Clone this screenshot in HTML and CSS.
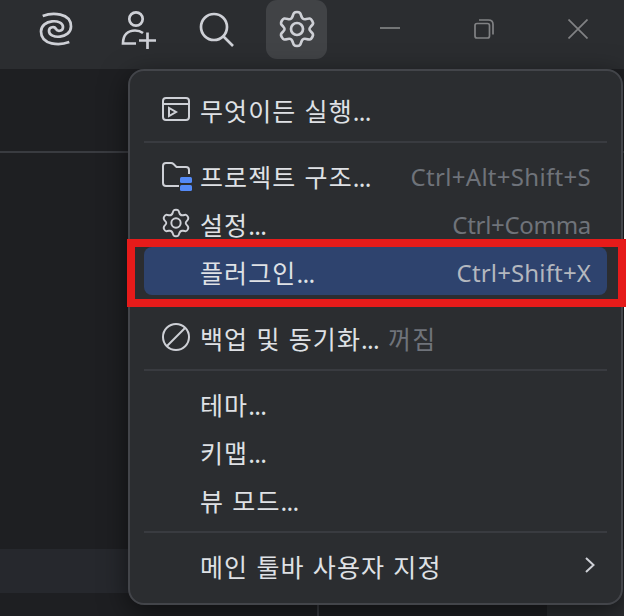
FILE: index.html
```html
<!DOCTYPE html>
<html lang="ko">
<head>
<meta charset="utf-8">
<title>설정</title>
<link rel="stylesheet" href="styles.css">
</head>
<body>
<svg class="defs" width="0" height="0">
  <symbol id="gear" viewBox="0 0 36 38">
    <path d="M18 2 C21 2 21.300 3 22.300 6 C23.300 9 24.500 9.700 27.200 9 C30.500 8.200 31.600 8 33.200 10.800 C34.800 13.500 34 14.500 31.800 16.600 C29.800 18.600 29.800 19.400 31.800 21.400 C34 23.500 34.800 24.500 33.200 27.200 C31.600 30 30.500 29.800 27.200 29 C24.500 28.300 23.300 29 22.300 32 C21.300 35 21 36 18 36 C15 36 14.700 35 13.700 32 C12.700 29 11.500 28.300 8.800 29 C5.500 29.800 4.400 30 2.800 27.200 C1.200 24.500 2 23.500 4.200 21.400 C6.200 19.400 6.200 18.600 4.200 16.600 C2 14.500 1.200 13.500 2.800 10.800 C4.400 8 5.500 8.200 8.800 9 C11.500 9.700 12.700 9 13.700 6 C14.700 3 15 2 18 2Z"/>
    <circle cx="18" cy="19" r="6"/>
  </symbol>
</svg>
<div class="window">
  <header class="toolbar">
    <svg class="swirl" width="36" height="36" viewBox="0 0 36 36"><path d="M4.700 5C14 1.500 33 1.500 33 15.500C33 28 11 28.500 11 20C11 15.500 17 15 18 18.500M31.300 31C22 34.500 3 34.500 3 20.500C3 8 25 7.500 25 16C25 20.500 19 21 18 17.500"/></svg>
    <svg class="person" width="38" height="40" viewBox="0 0 38 40"><circle cx="17" cy="9" r="6.700"/><path d="M17 33.500H4C4 25 9 20.500 16 20.500C19 20.500 22 21.500 24 23M28.500 22.500V39M20 30.500H37"/></svg>
    <svg class="search" width="36" height="36" viewBox="0 0 36 36"><circle cx="15" cy="15" r="13"/><path d="M24.500 24.500L34 34"/></svg>
    <div class="active"><svg width="36" height="38"><use href="#gear"/></svg></div>
    <svg class="min" width="20" height="20" viewBox="0 0 20 20"><path d="M0 9H20"/></svg>
    <svg class="restore" width="20" height="20" viewBox="0 0 20 20"><rect x="1" y="4.500" width="14.500" height="14.500" rx="2"/><path d="M5 1H14.500Q19 1 19 5.500V15.500"/></svg>
    <svg class="close" width="20" height="20" viewBox="0 0 20 20"><path d="M.5.500L19.500 19.500M19.500.500L.5 19.500"/></svg>
  </header>
  <main class="editor">
    <div class="tabs"></div>
    <div class="pane"></div>
    <div class="row"></div>
    <div class="bottom"><div class="split"></div><div class="corner"></div></div>
  </main>
</div>
<nav class="menu">
  <div class="item first"><svg class="icon" width="28" height="28" viewBox="0 0 28 28"><rect x="1" y="2" width="26" height="22" rx="3"/><path d="M1 8H27M7 12V20L14 16Z"/></svg><span class="label">무엇이든 실행<span class="dots">...</span></span></div>
  <hr>
  <div class="item"><svg class="icon folder" width="30" height="28" viewBox="0 0 30 28"><path d="M17 25H4Q1 25 1 22V5Q1 2 4 2H9Q10.500 2 11.500 3L14.500 6H24Q27 6 27 9V13"/><rect class="blue" x="18" y="16" width="12" height="6" rx="1.500"/><rect class="blue" x="18" y="24" width="12" height="6" rx="1.500"/></svg><span class="label">프로젝트 구조<span class="dots">...</span></span><span class="key k1">Ctrl+Alt+Shift+S</span></div>
  <div class="item"><svg class="icon gear" width="28" height="30"><use href="#gear"/></svg><span class="label">설정<span class="dots">...</span></span><span class="key k2">Ctrl+Comma</span></div>
  <div class="item selected"><span class="icon"></span><span class="label">플러그인<span class="dots">...</span></span><span class="key k3">Ctrl+Shift+X</span></div>
  <div class="item backup"><svg class="icon" width="28" height="28" viewBox="0 0 28 28"><circle cx="14" cy="13" r="13"/><path d="M5 22L23 4"/></svg><span class="label">백업 및 동기화<span class="dots">...</span></span><span class="label off">꺼짐</span></div>
  <hr>
  <div class="item"><span class="icon"></span><span class="label">테마<span class="dots">...</span></span></div>
  <div class="item"><span class="icon"></span><span class="label">키맵<span class="dots">...</span></span></div>
  <div class="item"><span class="icon"></span><span class="label">뷰 모드<span class="dots">...</span></span></div>
  <hr class="last">
  <div class="item"><span class="icon"></span><span class="label">메인 툴바 사용자 지정</span><svg class="chevron" width="10" height="16" viewBox="0 0 10 16"><path d="M1 1L8.500 8L1 15"/></svg></div>
</nav>
<div class="highlight"></div>
</body>
</html>
```

FILE: styles.css
```css
* { box-sizing: border-box; }
body { margin: 0; width: 627px; height: 616px; overflow: hidden; background: #fff; font-family: "Noto Sans", "Noto Sans CJK KR", sans-serif; }
.defs { position: absolute; }
svg { flex: none; fill: none; stroke: #ced0d6; stroke-width: 2; }
.window { width: 624px; height: 616px; display: flex; flex-direction: column; background: #1e1f22; overflow: hidden; }
.toolbar { height: 69px; flex: none; display: flex; align-items: flex-start; padding-left: 38px; background: #2b2d30; }
.toolbar svg { stroke-width: 2.7; }
.swirl { margin-top: 11px; }
.person { margin: 10px 0 0 45px; }
.search { margin: 12px 0 0 42px; }
.active { width: 61px; height: 59px; margin-left: 31px; padding-bottom: 2px; border-radius: 11px; background: #414346; display: flex; align-items: center; justify-content: center; }
.toolbar .min, .toolbar .restore, .toolbar .close { stroke: #818284; stroke-width: 1.7; margin-top: 19px; }
.toolbar .min { margin-left: 53px; }
.toolbar .restore { margin-left: 74px; }
.toolbar .close { margin-left: 74px; }
.editor { flex: 1; display: flex; flex-direction: column; }
.tabs { height: 84px; border-bottom: 2px solid #393b40; }
.pane { height: 396px; }
.row { height: 44px; background: #26282d; }
.bottom { flex: 1; display: flex; justify-content: space-between; }
.split { width: 319px; border-right: 2px solid #393b40; }
.corner { width: 77px; background: #2b2d30; }
.menu { position: absolute; left: 128px; top: 69px; width: 495px; height: 536px; padding: 15px 14px; border: 2px solid #43454a; border-radius: 16px; background: #2b2d30; box-shadow: 0 7px 28px #0008; clip-path: inset(-60px -1px -60px -80px); }
.item { height: 48px; display: flex; align-items: center; padding: 0 16px 0 18px; border-radius: 8px; color: #dfe1e5; font-size: 25px; line-height: 32px; white-space: nowrap; }
.icon { width: 28px; flex: none; margin-right: 10px; overflow: visible; }
.folder { width: 30px; margin-right: 8px; }
.blue { fill: #548af7; stroke: none; }
.gear { stroke-width: 2.5; }
.label { padding-top: 3px; letter-spacing: 1.1px; word-spacing: .6px; }
.first .label, .backup .label { padding-top: 1px; }
.dots { letter-spacing: -.7px; }
.key { margin-left: auto; padding-top: 4px; color: #6f737a; font-size: 24px; }
.k1 { letter-spacing: .3px; }
.k2 { letter-spacing: -.3px; }
.k3 { letter-spacing: .15px; }
.selected { background: #2e436e; }
.selected .key { color: #b4b8bf; }
hr { height: 2px; border: 0; margin: 7px 0 8px; background: #393b40; }
.last { margin-top: 8px; }
.backup { margin-top: 19px; }
.label.off { color: #6f737a; margin-left: 9px; }
.chevron { margin: 0 -4px 0 auto; }
.highlight { position: absolute; left: 127px; top: 239px; width: 499px; height: 68px; border: 8px solid #e61b1a; }
```
